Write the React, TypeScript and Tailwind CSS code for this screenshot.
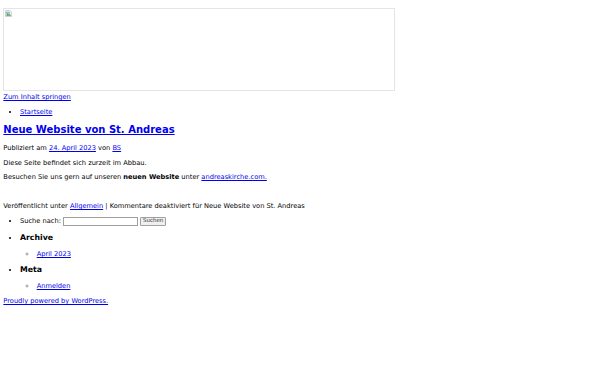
function BrokenImage() {
  return (
    <svg width="7" height="7" viewBox="0 0 16 16" className="absolute left-[1px] top-[1px]">
      <path d="M1 1h10l4 4v10H1z" fill="#f4f4f4" stroke="#a9a9a9" strokeWidth="1.2" />
      <path d="M2 4h9v5H2z" fill="#8fb8e6" />
      <path d="M2 13l4-5 3 3 2-2 3 4z" fill="#4f9a3c" />
    </svg>
  );
}

const link = "text-[#0000ee] underline";

export default function App() {
  return (
    <div className="min-h-screen bg-white p-[3.33px] font-['DejaVu_Sans',sans-serif] text-[6.67px] leading-[8.3px] text-black">
      <div className="pt-[4.7px]">
        <div className="relative h-[83px] w-[392px] border border-[#e4e4e4]">
          <BrokenImage />
        </div>
      </div>
      <div className="mt-[2px]">
        <a href="#" className={link}>Zum Inhalt springen</a>
      </div>
      <ul className="mt-[6.7px] list-disc pl-[16.67px]">
        <li>
          <a href="#" className={link}>Startseite</a>
        </li>
      </ul>

      <h2 className="mt-[8px] text-[10px] font-bold leading-[12.5px]">
        <a href="#" className={link}>Neue Website von St. Andreas</a>
      </h2>
      <p className="mt-[7.5px]">
        Publiziert am <a href="#" className={link}>24. April 2023</a> von <a href="#" className={link}>BS</a>
      </p>
      <p className="mt-[6.75px]">Diese Seite befindet sich zurzeit im Abbau.</p>
      <p className="mt-[5.6px]">
        Besuchen Sie uns gern auf unseren <strong className="font-bold">neuen Website</strong> unter{" "}
        <a href="#" className={link}>andreaskirche.com.</a>
      </p>
      <p className="mt-[20.6px]">
        Veröffentlicht unter <a href="#" className={link}>Allgemein</a> | Kommentare deaktiviert für Neue Website von St. Andreas
      </p>

      <ul className="mt-[5.8px] list-disc pl-[16.67px]">
        <li>
          <form className="flex h-[10px] items-center" onSubmit={(e) => e.preventDefault()}>
            <label>Suche nach:</label>
            <input className="ml-[2px] h-[9px] w-[75px] border border-[#a0a0a0] bg-white" type="text" />
            <button className="ml-[2px] h-[9px] rounded-[1px] border border-[#a0a0a0] bg-[#efefef] px-[2px] text-[5.5px] leading-none text-[#333]">
              Suchen
            </button>
          </form>
        </li>
        <li className="mt-[6.3px]">
          <h3 className="text-[7.8px] font-bold leading-[9.5px]">Archive</h3>
          <ul className="mt-[8.15px] list-[circle] pl-[16.67px] marker:text-[#999]">
            <li>
              <a href="#" className={link}>April 2023</a>
            </li>
          </ul>
        </li>
        <li className="mt-[6.1px]">
          <h3 className="text-[7.8px] font-bold leading-[9.5px]">Meta</h3>
          <ul className="mt-[8.1px] list-[circle] pl-[16.67px] marker:text-[#999]">
            <li>
              <a href="#" className={link}>Anmelden</a>
            </li>
          </ul>
        </li>
      </ul>
      <div className="mt-[6.7px]">
        <a href="#" className={link}>Proudly powered by WordPress.</a>
      </div>
    </div>
  );
}
